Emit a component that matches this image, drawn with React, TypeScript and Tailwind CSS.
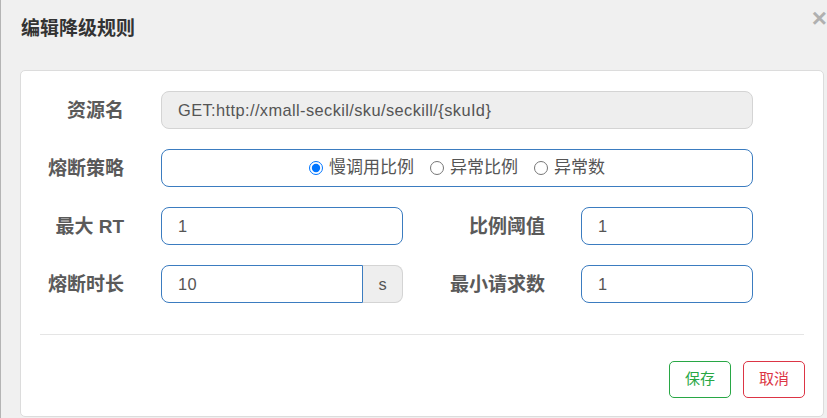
import { useState } from 'react';

const cjk = { fontFamily: '"Liberation Sans", "Noto Sans CJK SC", sans-serif' };

function Label({ text, width }: { text: string; width: string }) {
  return (
    <div className={`${width} shrink-0 text-right text-[19px] font-bold text-[#5a5a5a] leading-none`}>{text}</div>
  );
}

function TextInput({ value, width }: { value: string; width: string }) {
  return (
    <div
      className={`${width} h-[38px] rounded-lg border border-[#3b7cc0] bg-white px-4 flex items-center text-[16.4px] tracking-[0.4px] text-[#555]`}
    >
      {value}
    </div>
  );
}

export default function App() {
  const [grade, setGrade] = useState(0);
  const options = ['慢调用比例', '异常比例', '异常数'];

  return (
    <div className="relative w-[827px] h-[418px] bg-[#f0f0f0] border-l border-[#b4b4b4] overflow-hidden" style={cjk}>
      <span className="absolute right-0 top-[5px] text-[26px] font-bold text-[#b0b0b0] leading-none">×</span>

      <div className="h-[70px] pl-[20px] pt-[17px]">
        <h3 className="text-[19px] font-bold text-[#333] leading-[24px]">编辑降级规则</h3>
      </div>

      <div className="ml-[19px] mr-[3px] h-[347px] bg-white border border-[#dcdcdc] rounded-[5px] pt-[20px]">
        <div className="flex flex-col gap-[20px]">
          <div className="flex items-center">
            <Label text="资源名" width="w-[103px]" />
            <div className="ml-[37px] w-[592px] h-[38px] rounded-lg border border-[#d4d4d4] bg-[#eeeeee] pl-[16px] pr-4 flex items-center text-[16.4px] tracking-[0.4px] text-[#555]">
              GET:http://xmall-seckil/sku/seckill/{'{skuId}'}
            </div>
          </div>

          <div className="flex items-center">
            <Label text="熔断策略" width="w-[103px]" />
            <div className="ml-[37px] w-[592px] h-[38px] rounded-lg border border-[#3b7cc0] bg-white flex items-center justify-center gap-[16px] text-[17px] text-[#555]">
              {options.map((o, i) => (
                <label key={o} className="flex items-center gap-[6px] cursor-pointer">
                  <input
                    type="radio"
                    name="grade"
                    checked={grade === i}
                    onChange={() => setGrade(i)}
                    className="w-[14px] h-[14px] m-0 accent-[#0075ff]"
                  />
                  <span>{o}</span>
                </label>
              ))}
            </div>
          </div>

          <div className="flex items-center">
            <Label text="最大 RT" width="w-[103px]" />
            <div className="ml-[37px]">
              <TextInput value="1" width="w-[242px]" />
            </div>
            <Label text="比例阈值" width="w-[142px]" />
            <div className="ml-[36px]">
              <TextInput value="1" width="w-[172px]" />
            </div>
          </div>

          <div className="flex items-center">
            <Label text="熔断时长" width="w-[103px]" />
            <div className="ml-[37px] w-[242px] h-[38px] flex">
              <div className="flex-1 rounded-l-lg border border-[#3b7cc0] bg-white px-4 flex items-center text-[16.4px] tracking-[0.4px] text-[#555]">
                10
              </div>
              <div className="w-[40px] rounded-r-lg border border-l-0 border-[#d4d4d4] bg-[#eeeeee] flex items-center justify-center text-[16.4px] text-[#555]">
                s
              </div>
            </div>
            <Label text="最小请求数" width="w-[142px]" />
            <div className="ml-[36px]">
              <TextInput value="1" width="w-[172px]" />
            </div>
          </div>
        </div>

        <div className="mt-[31px] mx-[19px] border-t border-[#e5e5e5]" />

        <div className="mt-[26px] mr-[18px] flex justify-end gap-[12px]">
          <button className="w-[62px] h-[37px] rounded-[5px] border border-[#28a745] text-[#28a745] text-[15px] bg-white">
            保存
          </button>
          <button className="w-[62px] h-[37px] rounded-[5px] border border-[#dc3545] text-[#dc3545] text-[15px] bg-white">
            取消
          </button>
        </div>
      </div>
    </div>
  );
}
